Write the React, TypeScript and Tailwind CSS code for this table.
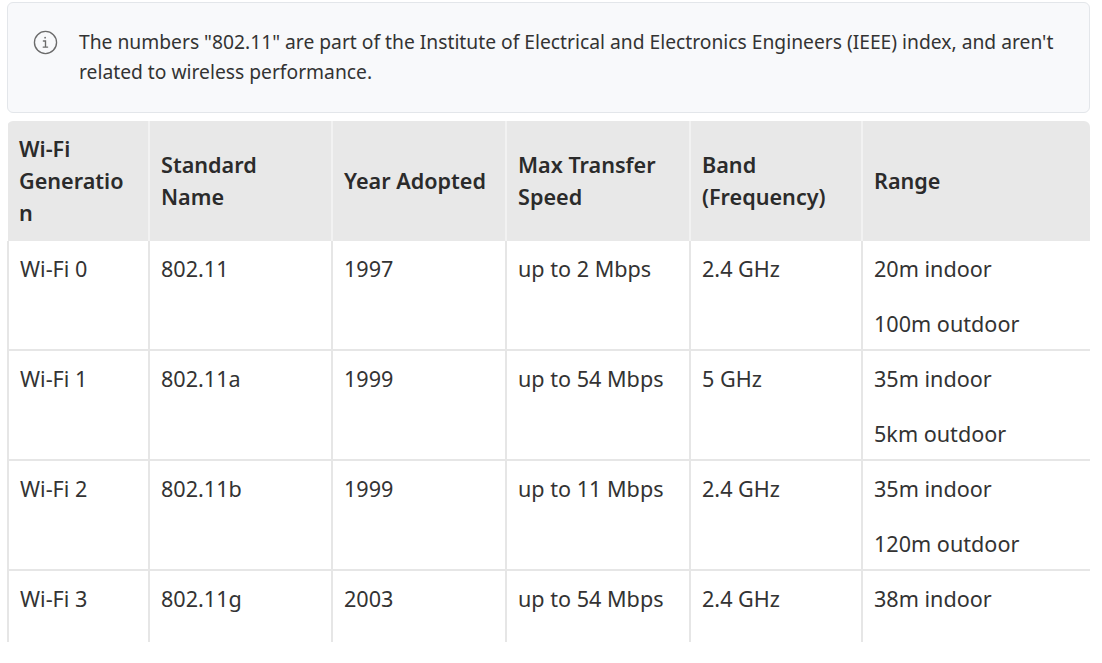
import React from "react";

type Row = {
  gen: string;
  name: string;
  year: string;
  speed: string;
  band: string;
  range: string[];
};

// last row is cut off by the frame, so only its first range line is shown
const rows: Row[] = [
  { gen: "Wi-Fi 0", name: "802.11", year: "1997", speed: "up to 2 Mbps", band: "2.4 GHz", range: ["20m indoor", "100m outdoor"] },
  { gen: "Wi-Fi 1", name: "802.11a", year: "1999", speed: "up to 54 Mbps", band: "5 GHz", range: ["35m indoor", "5km outdoor"] },
  { gen: "Wi-Fi 2", name: "802.11b", year: "1999", speed: "up to 11 Mbps", band: "2.4 GHz", range: ["35m indoor", "120m outdoor"] },
  { gen: "Wi-Fi 3", name: "802.11g", year: "2003", speed: "up to 54 Mbps", band: "2.4 GHz", range: ["38m indoor"] },
];

const headers = ["Wi-Fi Generation", "Standard Name", "Year Adopted", "Max Transfer Speed", "Band (Frequency)", "Range"];
const widths = ["w-[141px]", "w-[183px]", "w-[174px]", "w-[184px]", "w-[172px]", "w-[229px]"];

function InfoIcon() {
  return (
    <svg width="25" height="25" viewBox="0 0 26 26" fill="none" stroke="#6b6b6b" strokeWidth="1.4" strokeLinecap="round">
      <circle cx="13" cy="13" r="11.5" />
      <circle cx="12.6" cy="8" r="0.9" fill="#6b6b6b" stroke="none" />
      <path d="M10.8 11.4h2.2v6.4M10.6 17.8h4.6" />
    </svg>
  );
}

export default function App() {
  return (
    <div className="h-[663px] w-[1102px] overflow-hidden bg-white text-[#333] font-['Noto_Sans',sans-serif]">
      <div className="ml-[7px] mt-[2px] w-[1083px]">
        <div className="flex items-start gap-[21px] rounded-md border border-[#e3e6ea] bg-[#f8f9fb] pl-[25px] pr-6 pt-[24px] pb-[25px]">
          <div className="mt-[3px] shrink-0">
            <InfoIcon />
          </div>
          <p className="text-[19.25px] leading-[30px] text-[#333]">
            The numbers "802.11" are part of the Institute of Electrical and Electronics Engineers (IEEE) index, and aren't related to wireless performance.
          </p>
        </div>

        <div className="mt-[8px] h-[521px] overflow-hidden rounded-t-md">
          <table className="w-[1083px] table-fixed border-collapse text-[21.6px] leading-[32px]">
            <thead>
              <tr className="bg-[#e8e8e8]">
                {headers.map((h, i) => (
                  <th
                    key={h}
                    className={`${widths[i]} border-r-2 border-[#f2f2f2] last:border-r-0 pl-[11px] pr-3 py-3 text-left align-middle font-semibold text-[#2b2b2b] [overflow-wrap:anywhere]`}
                  >
                    {h}
                  </th>
                ))}
              </tr>
            </thead>
            <tbody>
              {rows.map((r) => (
                <tr key={r.gen} className="border-b-2 border-[#e6e6e6]">
                  <td className="border-x-2 border-[#e6e6e6] pl-[11px] pr-3 pt-[12px] pb-[9px] align-top">{r.gen}</td>
                  <td className="border-r-2 border-[#e6e6e6] pl-[11px] pr-3 pt-[12px] pb-[9px] align-top">{r.name}</td>
                  <td className="border-r-2 border-[#e6e6e6] pl-[11px] pr-3 pt-[12px] pb-[9px] align-top">{r.year}</td>
                  <td className="border-r-2 border-[#e6e6e6] pl-[11px] pr-3 pt-[12px] pb-[9px] align-top">{r.speed}</td>
                  <td className="border-r-2 border-[#e6e6e6] pl-[11px] pr-3 pt-[12px] pb-[9px] align-top">{r.band}</td>
                  <td className="border-r-2 border-[#e6e6e6] pl-[11px] pr-3 pt-[12px] pb-[9px] align-top">
                    <div className="flex min-h-[87px] flex-col gap-[23px]">
                      {r.range.map((t) => (
                        <p key={t}>{t}</p>
                      ))}
                    </div>
                  </td>
                </tr>
              ))}
            </tbody>
          </table>
        </div>
      </div>
    </div>
  );
}
